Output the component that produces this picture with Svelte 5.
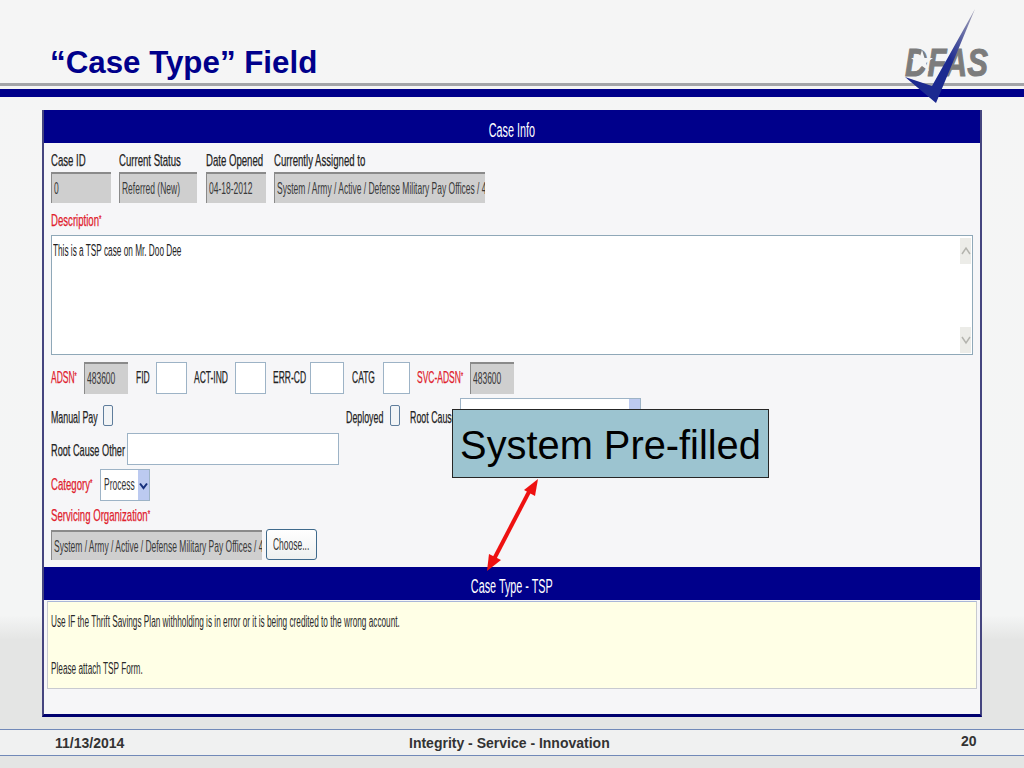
<script>
  const topFields = [
    { label: 'Case ID', value: '0', width: 60, gap: 8 },
    { label: 'Current Status', value: 'Referred (New)', width: 78, gap: 9 },
    { label: 'Date Opened', value: '04-18-2012', width: 60, gap: 8 },
    { label: 'Currently Assigned to', value: 'System / Army / Active / Defense Military Pay Offices / 48', width: 211, gap: 0 }
  ];
  const codes = [
    { label: 'ADSN', req: true, labelW: 33, width: 44, gap: 8, value: '483600' },
    { label: 'FID', labelW: 20, width: 31, gap: 7 },
    { label: 'ACT-IND', labelW: 41, width: 31, gap: 7 },
    { label: 'ERR-CD', labelW: 37, width: 34, gap: 8 },
    { label: 'CATG', labelW: 31, width: 27, gap: 7 },
    { label: 'SVC-ADSN', req: true, labelW: 53, width: 44, gap: 0, value: '483600' }
  ];
</script>

<main class="slide">
  <header class="head">
    <h1>“Case Type” Field</h1>
  </header>
  <div class="rule-grey"></div>
  <div class="rule-blue"></div>

  <section class="panel">
    <div class="band"><span>Case Info</span></div>

    <div class="form">
      <div class="cols labels">
        {#each topFields as f}
          <div class="lab" style="width:{f.width}px;margin-right:{f.gap}px"><span class="sq">{f.label}</span></div>
        {/each}
      </div>
      <div class="cols">
        {#each topFields as f}
          <div class="ro tall" style="width:{f.width}px;margin-right:{f.gap}px"><span class="val">{f.value}</span></div>
        {/each}
      </div>

      <div class="lab red desc"><span class="sq">Description<small>*</small></span></div>
      <div class="area">
        <span class="txt">This is a TSP case on Mr. Doo Dee</span>
        <div class="scroll">
          <div class="sbtn"><svg width="10" height="10" viewBox="0 0 10 10"><path d="M1 8 5 2 9 8" /></svg></div>
          <div class="sbtn"><svg width="10" height="10" viewBox="0 0 10 10"><path d="M1 2 5 8 9 2" /></svg></div>
        </div>
      </div>

      <div class="cols codes">
        {#each codes as c}
          <div class="lab" class:red={c.req} style="width:{c.labelW}px"><span class="sq">{c.label}{#if c.req}<small>*</small>{/if}</span></div>
          {#if c.value}
            <div class="ro" style="width:{c.width}px;margin-right:{c.gap}px"><span class="val">{c.value}</span></div>
          {:else}
            <div class="box" style="width:{c.width}px;margin-right:{c.gap}px"></div>
          {/if}
        {/each}
      </div>

      <div class="cols checks">
        <div class="lab w52"><span class="sq">Manual Pay</span></div>
        <div class="check"></div>
        <div class="lab deployed"><span class="sq">Deployed</span></div>
        <div class="check"></div>
        <div class="lab rootcause"><span class="sq">Root Cause</span></div>
        <div class="rootsel"><div class="dropbtn"></div></div>
      </div>

      <div class="cols other">
        <div class="lab w76"><span class="sq">Root Cause Other</span></div>
        <div class="box wide"></div>
      </div>

      <div class="cols category">
        <div class="lab red w49"><span class="sq">Category<small>*</small></span></div>
        <div class="select">
          <span class="val">Process</span>
          <div class="dropbtn">
            <svg width="9" height="9" viewBox="0 0 9 9"><path d="M1 2.5 4.5 7 8 2.5" /></svg>
          </div>
        </div>
      </div>

      <div class="lab red org"><span class="sq">Servicing Organization<small>*</small></span></div>
      <div class="cols orgrow">
        <div class="ro orgval"><span class="val">System / Army / Active / Defense Military Pay Offices / 48</span></div>
        <button class="choose"><span class="val">Choose...</span></button>
      </div>
    </div>

    <div class="band low"><span>Case Type - TSP</span></div>
    <div class="note">
      <p><span class="txt">Use IF the Thrift Savings Plan withholding is in error or it is being credited to the wrong account.</span></p>
      <p><span class="txt">Please attach TSP Form.</span></p>
    </div>
  </section>

  <footer class="foot">
    <span class="date">11/13/2014</span>
    <span class="motto">Integrity - Service - Innovation</span>
    <span class="page">20</span>
  </footer>

  <!-- overlays -->
  <div class="callout">System Pre-filled</div>
  <svg class="arrow" width="70" height="100" viewBox="0 0 70 100">
    <line x1="47" y1="12" x2="9" y2="85" />
    <polygon points="54,3 51,20 40,14" />
    <polygon points="3,95 5,78 17,84" />
  </svg>
  <svg class="logo" width="100" height="104" viewBox="0 0 100 104">
    <defs>
      <linearGradient id="tickfill" x1="0.9" y1="0" x2="0.5" y2="0.4">
        <stop offset="0" stop-color="#9a9ab4" />
        <stop offset="1" stop-color="#1c2a90" />
      </linearGradient>
    </defs>
    <text x="5" y="76" class="dfas" textLength="83" lengthAdjust="spacingAndGlyphs">DFAS</text>
    <polygon class="star" points="22,50 24.5,58 33,58 26,63 29,71 22,66 15,71 18,63 11,58 19.5,58" />
    <polygon class="tick" points="75,9 36,103 5,77 32,86" fill="url(#tickfill)" />
  </svg>
</main>

<style>
  :global(body) {
    margin: 0;
    background: #f4f5f5;
  }

  .slide {
    position: relative;
    width: 1024px;
    height: 768px;
    overflow: hidden;
    display: flex;
    flex-direction: column;
    font-family: "Liberation Sans", Arial, sans-serif;
    background: linear-gradient(#f5f5f5 0, #f4f5f5 615px, #e4e5e4 640px);
  }

  .head {
    height: 83px;
    flex: none;
    display: flex;
    align-items: flex-end;
    padding-left: 50px;
    box-sizing: border-box;
  }
  h1 {
    margin: 0 0 3px;
    font-size: 31.3px;
    line-height: 34px;
    font-weight: bold;
    color: #00008b;
  }
  .rule-grey {
    height: 3px;
    flex: none;
    background: #a3a4a8;
  }
  .rule-blue {
    height: 8px;
    flex: none;
    margin-top: 3px;
    background: #00008b;
  }

  .panel {
    flex: none;
    width: 936px;
    height: 604px;
    margin: 13px 0 0 42px;
    border-left: 2px solid #45457f;
    border-right: 2px solid #45457f;
    border-bottom: 3px solid #00006e;
    background: #f6f6f8;
    display: flex;
    flex-direction: column;
  }
  .band {
    height: 33px;
    flex: none;
    box-sizing: border-box;
    padding-top: 7px;
    background: #00008b;
    color: #fff;
    display: flex;
    align-items: center;
    justify-content: center;
    font-size: 20px;
  }
  .band.low {
    padding-top: 6px;
  }
  .band span {
    display: inline-block;
    transform: scaleX(0.54);
    white-space: nowrap;
  }

  /* the source UI is a squeezed screenshot, so text is narrowed */
  .sq, .val, .txt {
    display: inline-block;
    transform-origin: left center;
    white-space: nowrap;
  }
  .sq {
    transform: scaleX(0.565);
  }
  .val {
    transform: scaleX(0.53);
  }
  .txt {
    transform: scaleX(0.515);
  }
  small {
    font-size: 11px;
    line-height: 0;
    vertical-align: 3px;
  }

  .form {
    flex: none;
    height: 424px;
    padding-left: 7px;
    box-sizing: border-box;
  }
  .cols {
    display: flex;
    align-items: center;
  }
  .lab {
    flex: none;
    height: 20px;
    font-size: 17px;
    line-height: 20px;
    color: #222;
    white-space: nowrap;
    -webkit-text-stroke: 0.25px currentColor;
  }
  .red {
    color: #e0202c;
  }
  .labels {
    padding-top: 7px;
    height: 22px;
  }

  .ro {
    flex: none;
    height: 30px;
    box-sizing: border-box;
    background: #cfcfcf;
    border-top: 2px solid #8a8a8a;
    border-left: 1px solid #8a8a8a;
    padding-left: 2px;
    font-size: 16px;
    line-height: 29px;
    color: #3a3a3a;
    overflow: hidden;
  }
  .tall {
    height: 31px;
  }
  .desc {
    margin-top: 8px;
  }
  .area {
    position: relative;
    height: 120px;
    width: 922px;
    margin-top: 4px;
    box-sizing: border-box;
    background: #fff;
    border: 1px solid #8fa8b8;
    padding: 5px 1px;
    font-size: 16px;
    line-height: 20px;
    color: #222;
  }
  .scroll {
    position: absolute;
    top: 2px;
    right: 1px;
    bottom: 1px;
    width: 11px;
    display: flex;
    flex-direction: column;
    justify-content: space-between;
  }
  .sbtn {
    height: 26px;
    background: #ecece8;
    display: flex;
    align-items: center;
    justify-content: center;
  }
  .sbtn path {
    fill: none;
    stroke: #b4b4ae;
    stroke-width: 1.5;
  }

  .codes {
    margin-top: 7px;
    height: 32px;
  }
  .codes .sq {
    transform: scaleX(0.5);
  }
  .codes .ro {
    height: 32px;
    line-height: 30px;
  }
  .box {
    flex: none;
    height: 32px;
    box-sizing: border-box;
    background: #fff;
    border: 1px solid #9db3c6;
  }

  .checks {
    height: 35px;
    margin-top: 4px;
    align-items: flex-start;
  }
  .checks .sq {
    transform: scaleX(0.52);
  }
  .checks .lab {
    margin-top: 10px;
  }
  .check {
    flex: none;
    width: 10px;
    height: 21px;
    margin-top: 7px;
    box-sizing: border-box;
    background: #f2f4f6;
    border: 1.5px solid #5f7d9c;
    border-radius: 2px;
  }
  .w52 {
    width: 52px;
  }
  .checks .deployed {
    width: 44px;
    margin-left: 233px;
  }
  .checks .rootcause {
    width: 50px;
    margin-left: 10px;
  }
  .rootsel {
    flex: none;
    width: 181px;
    height: 35px;
    box-sizing: border-box;
    background: #fff;
    border: 1px solid #9db3c6;
    display: flex;
    justify-content: flex-end;
  }
  .dropbtn {
    width: 11px;
    background: #bccaf0;
    display: flex;
    align-items: center;
    justify-content: center;
  }
  .dropbtn path {
    fill: none;
    stroke: #16307c;
    stroke-width: 2;
  }

  .other {
    height: 32px;
  }
  .other .sq {
    transform: scaleX(0.54);
  }
  .other .lab {
    margin-top: 4px;
  }
  .w76 {
    width: 76px;
  }
  .wide {
    width: 212px;
  }

  .category {
    height: 32px;
    margin-top: 4px;
  }
  .w49 {
    width: 49px;
  }
  .select {
    flex: none;
    width: 50px;
    height: 32px;
    box-sizing: border-box;
    background: #fff;
    border: 1px solid #9db3c6;
    padding-left: 3px;
    display: flex;
    justify-content: space-between;
    font-size: 16px;
    line-height: 30px;
    color: #333;
  }
  .select .val {
    width: 34px;
  }
  .select .dropbtn {
    width: 13px;
  }

  .org {
    margin-top: 5px;
  }
  .orgrow {
    margin-top: 3px;
    gap: 4px;
  }
  .orgval {
    width: 211px;
  }
  .choose {
    width: 51px;
    height: 31px;
    padding: 0 0 0 6px;
    text-align: left;
    box-sizing: border-box;
    background: linear-gradient(#fff, #eef0f0);
    border: 1.5px solid #3f6a8c;
    border-radius: 3px;
    font-family: inherit;
    font-size: 16px;
    color: #333;
  }

  .note {
    flex: none;
    width: 930px;
    height: 88px;
    margin: 1px 0 0 3px;
    box-sizing: border-box;
    background: #ffffe6;
    border: 1px solid #c8cad0;
    border-top-color: #a9b6d8;
    padding-left: 3px;
    font-size: 16px;
    color: #2a2a2a;
  }
  .note p {
    margin: 0;
    height: 20px;
    line-height: 20px;
  }
  .note p:first-child {
    margin-top: 10px;
  }
  .note p + p {
    margin-top: 27px;
  }

  .foot {
    flex: none;
    position: relative;
    height: 27px;
    margin-top: 12px;
    box-sizing: border-box;
    border-top: 1px solid #7189b8;
    border-bottom: 1px solid #7189b8;
    background: #f0f1f1;
    font-size: 14px;
    font-weight: bold;
    color: #333;
    display: grid;
    grid-template-columns: 354px 1fr 63px;
    align-items: center;
    padding-left: 55px;
  }
  .motto {
    padding-top: 1px;
  }
  .page {
    margin-top: -3px;
  }

  .callout {
    position: absolute;
    left: 452px;
    top: 409px;
    width: 317px;
    height: 69px;
    box-sizing: border-box;
    background: #9cc4d0;
    border: 1.5px solid #262626;
    font-size: 39.8px;
    line-height: 71px;
    text-align: center;
    color: #000;
    white-space: nowrap;
  }
  .arrow {
    position: absolute;
    left: 484px;
    top: 476px;
  }
  .arrow line {
    stroke: #ee1111;
    stroke-width: 4;
  }
  .arrow polygon {
    fill: #ee1111;
  }
  .logo {
    position: absolute;
    left: 900px;
    top: 0;
  }
  .dfas {
    font-family: "Liberation Sans", Arial, sans-serif;
    font-size: 39px;
    font-weight: bold;
    font-style: italic;
    fill: #7c7c7c;
    stroke: #7c7c7c;
    stroke-width: 1;
  }
  .star {
    fill: #f4f5f5;
  }
</style>
